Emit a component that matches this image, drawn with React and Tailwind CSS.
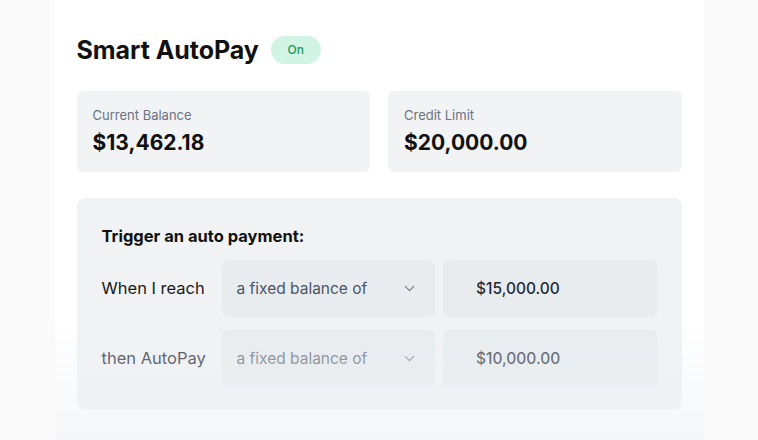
import { ChevronDown } from "lucide-react";

function StatCard({ label, value }) {
  return (
    <div className="flex h-[81px] flex-col gap-[5px] rounded-md bg-[#f1f3f5] px-4 pt-[15px]">
      <div className="text-[13px] leading-[18px] text-[#6b7280]">{label}</div>
      <div className="text-[21px] font-bold leading-[28px] text-[#111111]">{value}</div>
    </div>
  );
}

function TriggerRow({ label, select, amount, faded }) {
  return (
    <>
      <div className={`flex items-center text-[16.5px] ${faded ? "text-[#3f4650]" : "text-[#1a1a1a]"}`}>
        {label}
      </div>
      <div className="flex h-[57px] items-center justify-between rounded-md bg-[#e9ecef] pl-[15px] pr-[17px]">
        <span className={`text-[15.5px] ${faded ? "text-[#7b828c]" : "text-[#4b5563]"}`}>{select}</span>
        <ChevronDown
          size={17}
          strokeWidth={1.5}
          className={faded ? "text-[#8a9099]" : "text-[#6b7280]"}
        />
      </div>
      <div className="flex h-[57px] items-center rounded-md bg-[#e9ecef] pl-[33px]">
        <span className={`text-[15.5px] font-medium ${faded ? "text-[#4e5560]" : "text-[#1f2937]"}`}>
          {amount}
        </span>
      </div>
    </>
  );
}

export default function App() {
  return (
    <div className="h-[440px] w-full overflow-hidden bg-[#fafafa] font-['Inter',sans-serif]">
      <div className="relative mx-auto h-full w-[649px] bg-white px-[22px] pt-[36px]">
        <div className="flex h-7 items-center gap-3">
          <h1 className="text-[25px] font-bold leading-7 tracking-[-0.05px] text-[#111111]">Smart AutoPay</h1>
          <span className="flex h-7 w-[50px] items-center justify-center rounded-full bg-[#d2f4e4] text-[12px] font-medium text-[#1a9a5c]">
            On
          </span>
        </div>

        <div className="mt-[27px] grid grid-cols-2 gap-[18px]">
          <StatCard label="Current Balance" value="$13,462.18" />
          <StatCard label="Credit Limit" value="$20,000.00" />
        </div>

        <div className="mt-[26px] rounded-lg bg-[#f0f2f4] px-[25px] pb-[23px] pt-[26px]">
          <div className="text-[16.5px] font-bold leading-6 text-[#111111]">Trigger an auto payment:</div>
          <div className="mt-3 grid grid-cols-[112px_1fr_1fr] gap-x-2 gap-y-[13px]">
            <TriggerRow label="When I reach" select="a fixed balance of" amount="$15,000.00" />
            <TriggerRow label="then AutoPay" select="a fixed balance of" amount="$10,000.00" faded />
          </div>
        </div>

        {/* bottom fade */}
        <div className="pointer-events-none absolute inset-x-0 bottom-0 h-[120px] bg-gradient-to-b from-transparent to-[#eef1f5]/60" />
      </div>
    </div>
  );
}
